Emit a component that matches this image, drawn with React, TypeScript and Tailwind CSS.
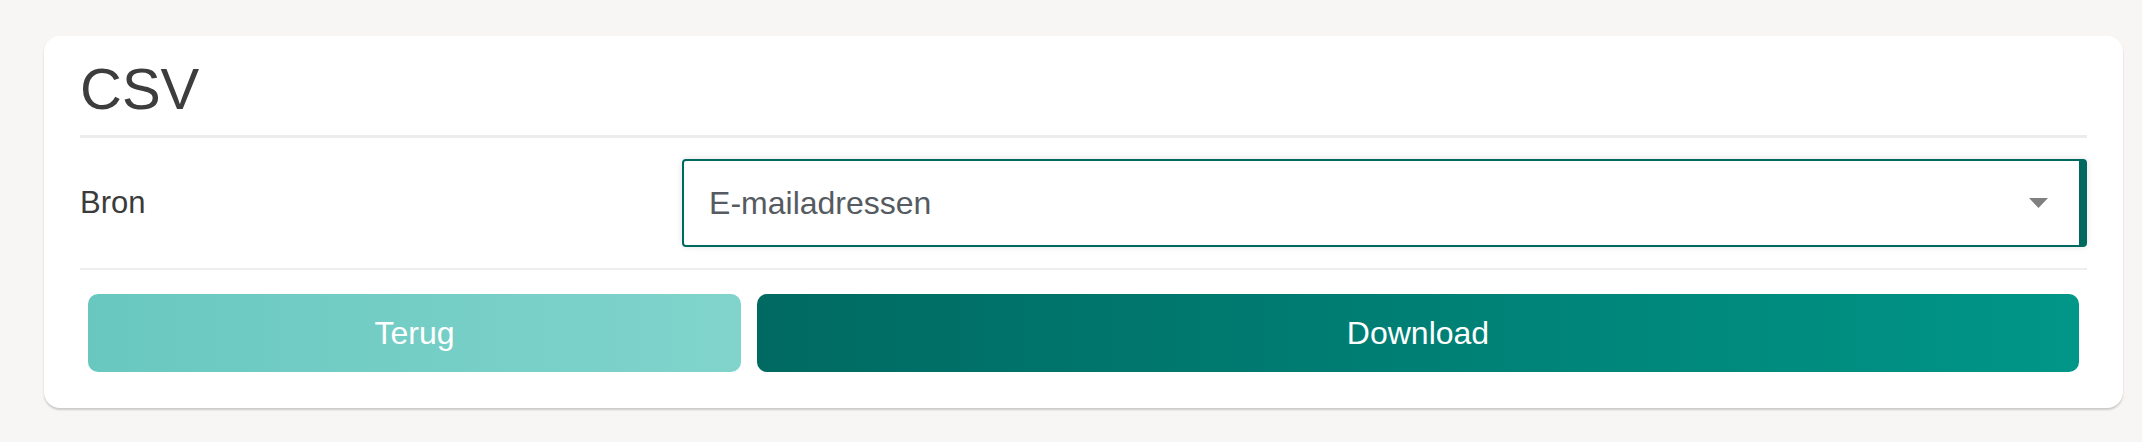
import React from 'react';

function App() {
  return (
    <div className="min-h-screen bg-[#f7f6f4] pl-[44px] pr-[19px] pt-[36px] pb-[36px] font-['Liberation_Sans',Arial,sans-serif]">
      <div className="bg-white rounded-[16px] shadow-[0_2px_2px_rgba(0,0,0,0.18)] px-[36px] pt-[18px] pb-[36px]">
        {/* Title */}
        <h1 className="text-[58px] leading-[70px] text-[#3d3d3d] font-normal">CSV</h1>
        <div className="mt-[11px] h-[3px] bg-[#ececec]" />

        {/* Source row */}
        <div className="flex items-center py-[21px]">
          <label className="w-[30%] text-[31px] text-[#3b3b3b]">Bron</label>
          <div className="w-[70%] relative">
            <div className="h-[88px] flex items-center justify-between border-2 border-r-[8px] border-[#00695f] rounded-[4px] pl-[25px] pr-[31px] shadow-[0_0_6px_rgba(0,0,0,0.12)]">
              <span className="text-[32px] text-[#555b61]">E-mailadressen</span>
              <svg width="19" height="10" viewBox="0 0 19 10" className="shrink-0">
                <polygon points="0,0 19,0 9.5,10" fill="#808080" />
              </svg>
            </div>
          </div>
        </div>
        <div className="h-[2px] bg-[#eeeeee]" />

        {/* Actions */}
        <div className="flex gap-[16px] px-[8px] mt-[24px]">
          <button className="w-[653px] h-[78px] rounded-[10px] bg-linear-to-r from-[#68c8c0] to-[#80d4cc] text-white text-[32px]">
            Terug
          </button>
          <button className="flex-1 h-[78px] rounded-[10px] bg-linear-to-r from-[#006a62] to-[#009688] text-white text-[32px]">
            Download
          </button>
        </div>
      </div>
    </div>
  );
}

export default App;
